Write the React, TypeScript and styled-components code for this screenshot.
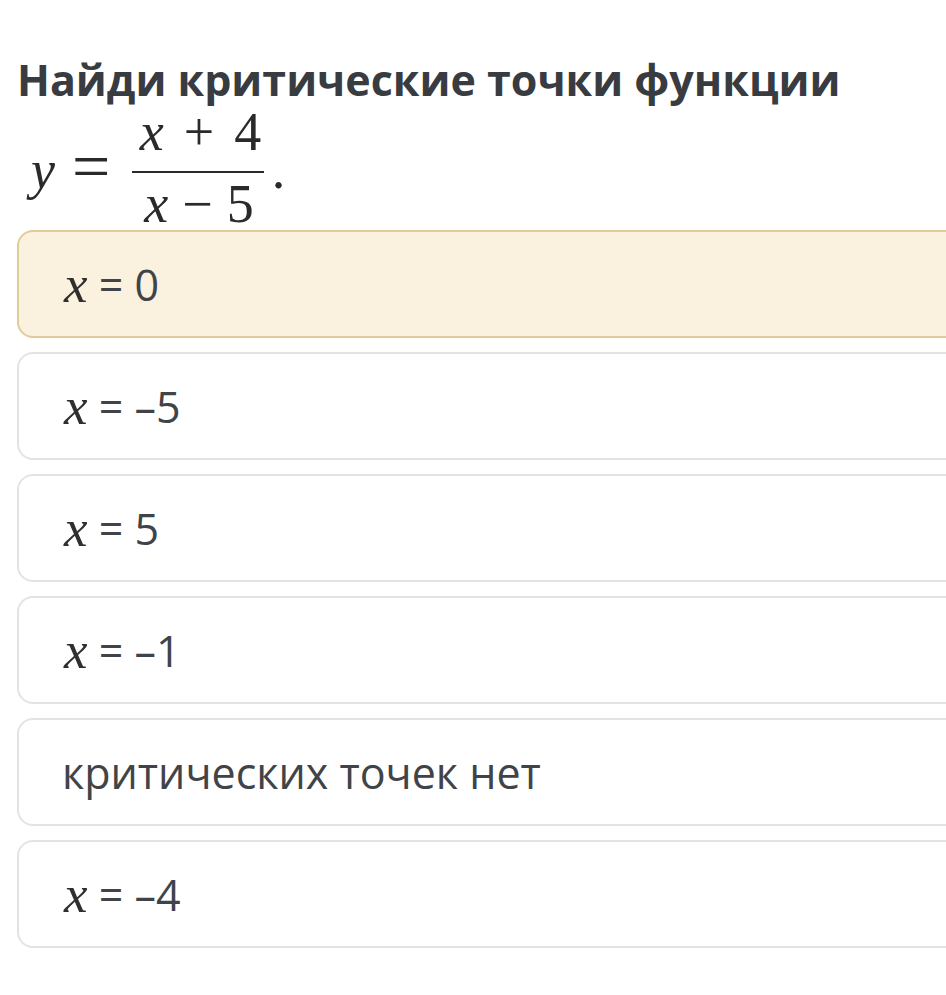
import React from "react";
import styled, { createGlobalStyle } from "styled-components";

const GlobalStyle = createGlobalStyle`
  html, body {
    margin: 0;
    padding: 0;
    background: #ffffff;
  }
  body {
    overflow: hidden;
    font-family: "Open Sans", "Noto Sans", sans-serif;
  }
`;

const Page = styled.main`
  width: 946px;
  height: 995px;
  overflow: hidden;
  box-sizing: border-box;
  padding: 54px 0 0 17px;
`;

const Title = styled.h1`
  margin: 0;
  font-family: "Open Sans", "Noto Sans", sans-serif;
  font-weight: 700;
  font-size: 43px;
  line-height: 52px;
  color: #383c41;
  white-space: nowrap;
`;

const Formula = styled.div`
  display: flex;
  align-items: flex-start;
  margin: 4px 0 0 14px;
  font-family: "Liberation Serif", "Times New Roman", serif;
  font-size: 54px;
  line-height: 54px;
  color: #2a2a2a;
`;

const MathVar = styled.span`
  font-style: italic;
`;

const Side = styled.span<{ $top: number; $size?: number; $gap?: number }>`
  margin-top: ${(p) => p.$top}px;
  margin-right: ${(p) => p.$gap ?? 0}px;
  font-size: ${(p) => p.$size ?? 54}px;
  line-height: ${(p) => p.$size ?? 54}px;
`;

const Fraction = styled.span`
  display: inline-flex;
  flex-direction: column;
  align-items: center;
  margin-right: 8px;
`;

const Numerator = styled.span`
  display: flex;
  align-items: baseline;
  padding: 0 2px 0 7px;
  line-height: 44px;
  margin-bottom: 17px;
  white-space: nowrap;
`;

const Denominator = styled.span`
  display: flex;
  align-items: baseline;
  padding: 0 10px 0 12px;
  line-height: 50px;
  margin-top: 6px;
  white-space: nowrap;
`;

const Bar = styled.span`
  align-self: stretch;
  height: 2px;
  background: #2a2a2a;
`;

const BinOp = styled.span<{ $gap: number }>`
  margin: 0 ${(p) => p.$gap}px;
`;

const Options = styled.div`
  display: flex;
  flex-direction: column;
  gap: 14px;
  margin-top: 1px;
`;

const Card = styled.div<{ $selected?: boolean }>`
  box-sizing: border-box;
  width: 960px;
  height: 108px;
  display: flex;
  align-items: center;
  padding-left: 43px;
  border: 2px solid ${(p) => (p.$selected ? "#e2cb9b" : "#e2e4e4")};
  border-radius: 16px;
  background: ${(p) => (p.$selected ? "#faf2df" : "#ffffff")};
  font-family: "Open Sans", "Noto Sans", sans-serif;
  font-size: 43px;
  color: #404448;
  white-space: pre;
`;

const OptVar = styled.span`
  font-family: "Liberation Serif", "Times New Roman", serif;
  font-style: italic;
  font-size: 53px;
  line-height: 1;
  color: #2f2f2f;
  margin-left: 2px;
`;

type Opt = { value?: string; text?: string; selected?: boolean };

const options: Opt[] = [
  { value: "0", selected: true },
  { value: "–5" },
  { value: "5" },
  { value: "–1" },
  { text: "критических точек нет" },
  { value: "–4" },
];

export default function App() {
  return (
    <>
      <GlobalStyle />
      <Page>
        <Title>Найди критические точки функции</Title>
        <Formula>
          <Side $top={33} $gap={17}>
            <MathVar>y</MathVar>
          </Side>
          <Side $top={22} $size={68} $gap={22}>
            =
          </Side>
          <Fraction>
            <Numerator>
              <MathVar>x</MathVar>
              <BinOp $gap={20}>+</BinOp>4
            </Numerator>
            <Bar />
            <Denominator>
              <MathVar>x</MathVar>
              <BinOp $gap={14}>−</BinOp>5
            </Denominator>
          </Fraction>
          <Side $top={33}>.</Side>
        </Formula>
        <Options>
          {options.map((o, i) => (
            <Card key={i} $selected={o.selected}>
              {o.text ? (
                o.text
              ) : (
                <>
                  <OptVar>x</OptVar>
                  {" = " + o.value}
                </>
              )}
            </Card>
          ))}
        </Options>
      </Page>
    </>
  );
}
